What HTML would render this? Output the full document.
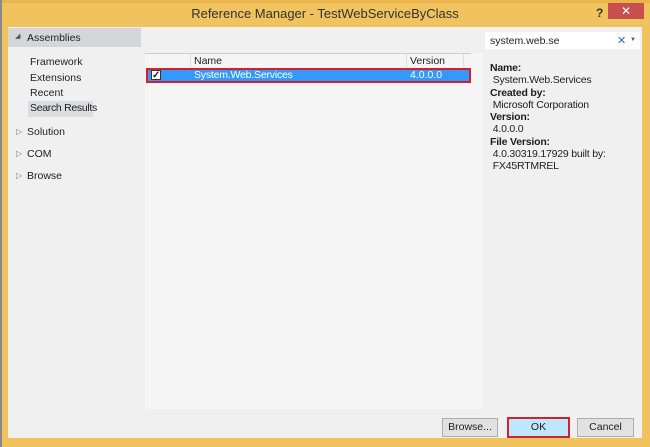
<!DOCTYPE html>
<html><head><meta charset="utf-8"><style>
*{margin:0;padding:0;box-sizing:border-box}
body{width:650px;height:447px;background:#f0c35e;font-family:"Liberation Sans",sans-serif;font-size:10.5px;color:#1e1e1e;position:relative;overflow:hidden}
.a{position:absolute}
</style></head><body>
<div class="a" style="left:0;top:0;width:650px;height:3px;background:#e9b44c"></div>
<div class="a" style="left:0;top:0;width:2px;height:447px;background:#8a8a8a"></div>
<div class="a" style="left:0;top:6px;width:650px;text-align:center;font-size:13px;color:#333">Reference Manager - TestWebServiceByClass</div>
<div class="a" style="left:596px;top:6px;font-size:12px;font-weight:bold;color:#333">?</div>
<div class="a" style="left:608px;top:3px;width:36px;height:16px;background:#c7504f;color:#fff;text-align:center;font-size:12px;line-height:16px">✕</div>
<div class="a" style="left:8px;top:27px;width:634px;height:411px;background:#f0f0f0"></div>
<div class="a" style="left:8px;top:28px;width:133px;height:19px;background:#d5d6da"></div>
<div class="a" style="left:15px;top:32px;font-size:7px;color:#555">◢</div>
<div class="a" style="left:27px;top:32px">Assemblies</div>
<div class="a" style="left:30px;top:56px">Framework</div>
<div class="a" style="left:30px;top:72px">Extensions</div>
<div class="a" style="left:30px;top:87px">Recent</div>
<div class="a" style="left:28px;top:101px;width:65px;height:16px;background:#dcdde1"></div>
<div class="a" style="left:30px;top:102px;letter-spacing:-0.3px">Search Results</div>
<div class="a" style="left:16px;top:127px;font-size:8px;color:#777">▷</div><div class="a" style="left:27px;top:126px">Solution</div>
<div class="a" style="left:16px;top:149px;font-size:8px;color:#777">▷</div><div class="a" style="left:27px;top:148px">COM</div>
<div class="a" style="left:16px;top:171px;font-size:8px;color:#777">▷</div><div class="a" style="left:27px;top:170px">Browse</div>
<div class="a" style="left:145px;top:27px;width:338px;height:382px;background:#f5f5f5"></div>
<div class="a" style="left:145px;top:27px;width:338px;height:26px;background:#f0f0f0"></div>
<div class="a" style="left:145px;top:53px;width:326px;height:1px;background:#ccc"></div>
<div class="a" style="left:190px;top:54px;width:1px;height:13px;background:#ddd"></div>
<div class="a" style="left:406px;top:54px;width:1px;height:13px;background:#ddd"></div>
<div class="a" style="left:463px;top:54px;width:1px;height:13px;background:#ddd"></div>
<div class="a" style="left:194px;top:55px">Name</div>
<div class="a" style="left:410px;top:55px">Version</div>
<div class="a" style="left:146px;top:68px;width:325px;height:15px;background:#3399ff;border:2px solid #d4202c"></div>
<div class="a" style="left:151px;top:70px;width:10px;height:10px;background:#fff;border:1px solid #333;font-size:10px;line-height:9px;text-align:center;font-weight:bold">✓</div>
<div class="a" style="left:194px;top:69px;color:#fff;letter-spacing:-0.2px">System.Web.Services</div>
<div class="a" style="left:410px;top:69px;color:#fff">4.0.0.0</div>
<div class="a" style="left:485px;top:32px;width:155px;height:17px;background:#fff"></div>
<div class="a" style="left:490px;top:35px">system.web.se</div>
<div class="a" style="left:617px;top:34px;color:#2a6fc9;font-size:11px">✕</div>
<div class="a" style="left:630px;top:37px;font-size:6px;color:#555">▼</div>
<div class="a" style="left:490px;top:62px;line-height:12.3px;letter-spacing:-0.2px"><b>Name:</b><br>&nbsp;System.Web.Services<br><b>Created by:</b><br>&nbsp;Microsoft Corporation<br><b>Version:</b><br>&nbsp;4.0.0.0<br><b>File Version:</b><br>&nbsp;4.0.30319.17929 built by:<br>&nbsp;FX45RTMREL</div>
<div class="a" style="left:442px;top:418px;width:56px;height:19px;background:#e1e1e1;border:1px solid #adadad;text-align:center;line-height:17px">Browse...</div>
<div class="a" style="left:507px;top:417px;width:63px;height:21px;background:#bee6fd;border:2px solid #d4202c;text-align:center;line-height:17px">OK</div>
<div class="a" style="left:577px;top:418px;width:57px;height:19px;background:#e1e1e1;border:1px solid #adadad;text-align:center;line-height:17px">Cancel</div>
</body></html>
